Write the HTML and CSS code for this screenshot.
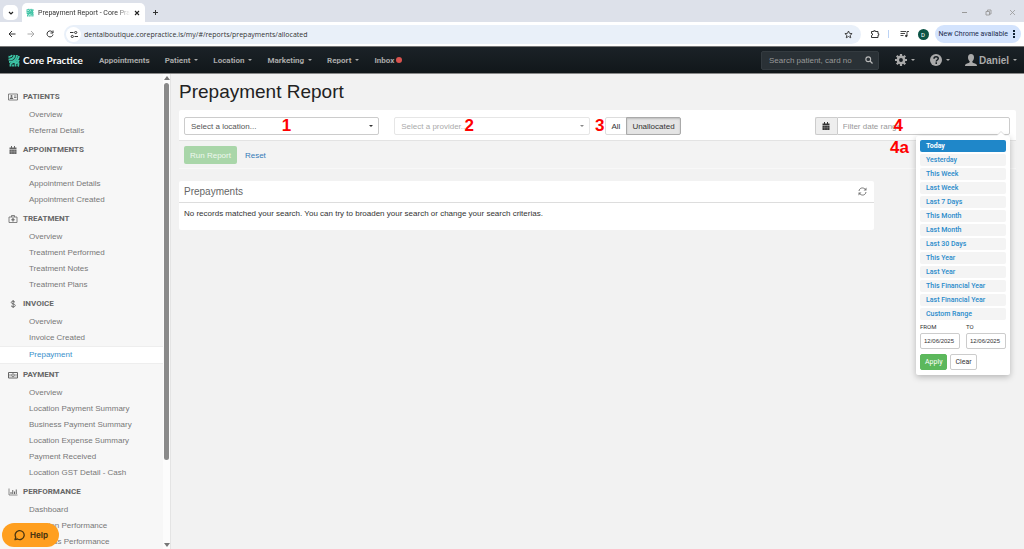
FILE: index.html
```html
<!DOCTYPE html>
<html lang="en">
<head>
    <meta charset="UTF-8">
    <meta name="viewport" content="width=device-width, initial-scale=1.0">
    <title>Prepayment Report - Core Practice</title>
    <link rel="stylesheet" href="styles.css">
</head>
<body>

    <svg class="defs" width="0" height="0" aria-hidden="true">
        <symbol id="tooth" viewBox="0 0 24 26">
            <g fill="none" stroke="#3cc3a4" stroke-width="3.700">
                <path d="M1 5.500c3 .5 6-.5 7-3.500M1 11c6 .5 11-3 12-9M2 16c9 0 15-5 16-14"/>
                <path d="M5 25v-4c0-3 4-4 7-5s8-5 10-12M10 25v-4M15 25v-6c3-1 6-4 7-7M20 25c1-2 1-5 1-8"/>
            </g>
        </symbol>
        <symbol id="calendar" viewBox="0 0 16 16">
            <path fill="currentColor" d="M1 3h3V0h2v3h4V0h2v3h3v3H1zM1 7h14v8a1 1 0 0 1-1 1H2a1 1 0 0 1-1-1z"/>
            <path stroke="#fff" stroke-opacity=".5" stroke-width=".8" d="M1 11.500h14M5.500 7v9M10.500 7v9"/>
        </symbol>
    </svg>

    <!-- Browser window -->
    <header class="browser">
        <div class="tab-strip">
            <button class="tab-search" aria-label="Search tabs"><svg width="6" height="4" viewBox="0 0 6 4"><path d="M1 1l2 2 2-2" fill="none" stroke="#222" stroke-width="1.2"/></svg></button>
            <div class="tab">
                <svg class="favicon" width="8" height="9"><use href="#tooth"/></svg>
                <span class="tab-title">Prepayment Report - Core Practice</span>
                <button class="icon-button" aria-label="Close tab"><svg width="6" height="6" viewBox="0 0 6 6"><path d="M1 1l4 4M5 1L1 5" stroke="#222" stroke-width="1.1"/></svg></button>
            </div>
            <button class="icon-button" aria-label="New tab"><svg width="7" height="7" viewBox="0 0 7 7"><path d="M3.500 1v5M1 3.500h5" stroke="#333"/></svg></button>
            <div class="window-buttons">
                <button class="icon-button" aria-label="Minimize"><svg width="7" height="7" viewBox="0 0 7 7"><path d="M1 3.500h5" stroke="#999"/></svg></button>
                <button class="icon-button" aria-label="Restore"><svg width="7" height="7" viewBox="0 0 7 7"><path d="M1 2.500h3.500V6H1zM2.500 2.500V1H6v4H4.500" fill="none" stroke="#999" stroke-width=".9"/></svg></button>
                <button class="icon-button" aria-label="Close"><svg width="7" height="7" viewBox="0 0 7 7"><path d="M1 1l5 5M6 1L1 6" stroke="#999" stroke-width=".8"/></svg></button>
            </div>
        </div>
        <div class="toolbar">
            <div class="toolbar-nav">
                <button class="icon-button" aria-label="Back"><svg width="8" height="8" viewBox="0 0 8 8"><path d="M7.500 4H1M4 1L1 4l3 3" fill="none" stroke="#333"/></svg></button>
                <button class="icon-button" aria-label="Forward"><svg width="8" height="8" viewBox="0 0 8 8"><path d="M.5 4H7M4 1l3 3-3 3" fill="none" stroke="#aaa"/></svg></button>
                <button class="icon-button" aria-label="Reload"><svg width="8" height="8" viewBox="0 0 8 8"><path d="M6.700 2.500A3 3 0 1 0 7 4.500M7 .5v2.500H4.500" fill="none" stroke="#333"/></svg></button>
            </div>
            <div class="omnibox">
                <button class="site-info" aria-label="Site information"><svg width="8" height="7" viewBox="0 0 8 7"><path d="M0 1.500h3.500M4.500 5.500H8" stroke="#333"/><circle cx="5.700" cy="1.500" r="1.100" fill="none" stroke="#333"/><circle cx="2.300" cy="5.500" r="1.100" fill="none" stroke="#333"/></svg></button>
                <input class="address" type="text" aria-label="Address" value="dentalboutique.corepractice.is/my/#/reports/prepayments/allocated">
                <button class="icon-button" aria-label="Bookmark"><svg width="9" height="9" viewBox="0 0 18 18"><path d="M9 2l2.100 4.700 5.100.5-3.900 3.400 1.200 5L9 13l-4.500 2.600 1.200-5L1.800 7.200l5.100-.5z" fill="none" stroke="#333" stroke-width="1.800"/></svg></button>
            </div>
            <button class="icon-button extensions" aria-label="Extensions"><svg width="10" height="10" viewBox="0 0 20 20"><path d="M3 5h4.500V3.500h3V5H16v4.500h1.500v3H16V17H3v-4l2-1V9.500L3 9z" fill="none" stroke="#333" stroke-width="2"/></svg></button>
            <span class="toolbar-divider"></span>
            <button class="icon-button media" aria-label="Media"><svg width="9" height="8" viewBox="0 0 18 16"><path d="M1 3h11M1 7h9M1 11h6M14 12V3h4" fill="none" stroke="#333" stroke-width="1.800"/><circle cx="12.500" cy="12" r="2.300" fill="#333"/></svg></button>
            <button class="profile" aria-label="Profile">D</button>
            <button class="update">New Chrome available <svg width="2" height="8" viewBox="0 0 2 8"><path d="M0 0h2v2H0zM0 3h2v2H0zM0 6h2v2H0z" fill="#123"/></svg></button>
        </div>
    </header>

    <!-- Site navigation -->
    <nav class="navbar">
        <a class="brand" href="#"><svg width="12" height="13"><use href="#tooth"/></svg>Core Practice</a>
        <div class="nav-links">
            <a href="#">Appointments</a>
            <a href="#">Patient<i class="caret"></i></a>
            <a href="#">Location<i class="caret"></i></a>
            <a href="#">Marketing<i class="caret"></i></a>
            <a href="#">Report<i class="caret"></i></a>
            <a href="#">Inbox<i class="dot"></i></a>
        </div>
        <form class="search">
            <input type="text" aria-label="Search" placeholder="Search patient, card no">
            <button class="icon-button" type="button" aria-label="Search"><svg width="8" height="8" viewBox="0 0 16 16"><circle cx="6.500" cy="6.500" r="4.800" fill="none" stroke="#bbb" stroke-width="2.200"/><path d="M10 10l5 5" stroke="#bbb" stroke-width="2.600"/></svg></button>
        </form>
        <div class="nav-tools">
            <a href="#" aria-label="Settings"><svg width="12" height="12" viewBox="0 0 24 24"><circle cx="12" cy="12" r="6.300" fill="none" stroke="#aaa" stroke-width="5"/><path d="M12 0v5M12 19v5M0 12h5M19 12h5M3.500 3.500L7 7M17 17l3.500 3.500M20.500 3.500L17 7M7 17l-3.500 3.500" stroke="#aaa" stroke-width="4.400"/></svg><i class="caret"></i></a>
            <a href="#" aria-label="Help topics"><svg width="12" height="12" viewBox="0 0 24 24"><circle cx="12" cy="12" r="12" fill="#aaa"/><path d="M8 9.500C8 4 16.500 4.500 16.500 9c0 3-4 3-4 6M12.500 16.500v3.500" fill="none" stroke="#171e22" stroke-width="3"/></svg><i class="caret"></i></a>
            <a class="user" href="#"><svg width="12" height="12" viewBox="0 0 24 24"><path fill="#aaa" d="M12 0c4 0 6 3 6 7s-2 6-3.500 8c0 2 1 2.500 4 3.500 4 1.500 5.500 2 5.500 5.500H0c0-3.500 1.500-4 5.500-5.500 3-1 4-1.500 4-3.500C8 13 6 11 6 7s2-7 6-7z"/></svg>Daniel<i class="caret"></i></a>
        </div>
    </nav>

    <div class="page">
        <aside class="sidebar">
            <div class="menu">
                <h2><svg width="10" height="8" viewBox="0 0 20 16"><path d="M1 2h18v12H1zM12 6h5M12 9h5" fill="none" stroke="currentColor" stroke-width="1.600"/><circle cx="7" cy="6" r="2" fill="currentColor"/><path d="M3.500 12c0-5 7-5 7 0z" fill="currentColor"/></svg>PATIENTS</h2>
                <ul>
                    <li><a href="#">Overview</a></li>
                    <li><a href="#">Referral Details</a></li>
                </ul>
                <h2><svg width="10" height="8"><use href="#calendar"/></svg>APPOINTMENTS</h2>
                <ul>
                    <li><a href="#">Overview</a></li>
                    <li><a href="#">Appointment Details</a></li>
                    <li><a href="#">Appointment Created</a></li>
                </ul>
                <h2><svg width="10" height="8" viewBox="0 0 20 16"><path d="M2 4h16v11H2zM7 4V1h6v3" fill="none" stroke="currentColor" stroke-width="1.600"/><path d="M10 6v7M6.500 9.500h7" stroke="currentColor" stroke-width="2.400"/></svg>TREATMENT</h2>
                <ul>
                    <li><a href="#">Overview</a></li>
                    <li><a href="#">Treatment Performed</a></li>
                    <li><a href="#">Treatment Notes</a></li>
                    <li><a href="#">Treatment Plans</a></li>
                </ul>
                <h2><svg width="10" height="8" viewBox="0 0 20 16"><path d="M14 4.500C12 1.500 6.500 2 6.500 5c0 3.500 8 2 8 6 0 3.500-6.500 3.500-8.500.5M10.300 0v16" fill="none" stroke="currentColor" stroke-width="1.900"/></svg>INVOICE</h2>
                <ul>
                    <li><a href="#">Overview</a></li>
                    <li><a href="#">Invoice Created</a></li>
                    <li class="active"><a href="#">Prepayment</a></li>
                </ul>
                <h2><svg width="10" height="8" viewBox="0 0 20 16"><path d="M1 3h18v11H1z" fill="none" stroke="currentColor" stroke-width="2"/><circle cx="10" cy="8.500" r="3" fill="none" stroke="currentColor" stroke-width="1.600"/><path d="M10 7v3M4 6v5M16 6v5" stroke="currentColor" stroke-width="1.500"/></svg>PAYMENT</h2>
                <ul>
                    <li><a href="#">Overview</a></li>
                    <li><a href="#">Location Payment Summary</a></li>
                    <li><a href="#">Business Payment Summary</a></li>
                    <li><a href="#">Location Expense Summary</a></li>
                    <li><a href="#">Payment Received</a></li>
                    <li><a href="#">Location GST Detail - Cash</a></li>
                </ul>
                <h2><svg width="10" height="8" viewBox="0 0 20 16"><path d="M2 1v13h17" fill="none" stroke="currentColor" stroke-width="1.500"/><path d="M6 12V8M9.500 12V4M13 12V7M16.500 12V3" stroke="currentColor" stroke-width="2"/></svg>PERFORMANCE</h2>
                <ul>
                    <li><a href="#">Dashboard</a></li>
                    <li><a href="#">Location Performance</a></li>
                    <li><a href="#">Business Performance</a></li>
                </ul>
            </div>
            <div class="scrollbar">
                <i class="arrow-up"></i>
                <i class="thumb"></i>
                <i class="arrow-down"></i>
            </div>
        </aside>

        <main class="content">
            <h1>Prepayment Report</h1>

            <form class="filters">
                <div class="filter-row">
                    <div class="field">
                        <select class="control" aria-label="Location"><option>Select a location...</option></select>
                        <i class="caret"></i>
                        <b class="mark mark-1">1</b>
                    </div>
                    <div class="field disabled">
                        <select class="control" aria-label="Provider" disabled><option>Select a provider...</option></select>
                        <i class="caret"></i>
                        <b class="mark mark-2">2</b>
                    </div>
                    <div class="field toggle">
                        <button type="button">All</button>
                        <button type="button" class="pressed" aria-pressed="true">Unallocated</button>
                        <b class="mark mark-3">3</b>
                    </div>
                    <div class="field date-range">
                        <label class="addon" for="range" aria-label="Date range"><svg width="8" height="8"><use href="#calendar"/></svg></label>
                        <input class="control" id="range" type="text" placeholder="Filter date range">
                        <b class="mark mark-4">4</b>
                        <b class="mark mark-4a">4a</b>
                        <div class="range-menu">
                            <button type="button" class="range selected">Today</button>
                            <button type="button" class="range">Yesterday</button>
                            <button type="button" class="range">This Week</button>
                            <button type="button" class="range">Last Week</button>
                            <button type="button" class="range">Last 7 Days</button>
                            <button type="button" class="range">This Month</button>
                            <button type="button" class="range">Last Month</button>
                            <button type="button" class="range">Last 30 Days</button>
                            <button type="button" class="range">This Year</button>
                            <button type="button" class="range">Last Year</button>
                            <button type="button" class="range">This Financial Year</button>
                            <button type="button" class="range">Last Financial Year</button>
                            <button type="button" class="range">Custom Range</button>
                            <div class="range-dates">
                                <label>FROM<input type="text" value="12/06/2025"></label>
                                <label>TO<input type="text" value="12/06/2025"></label>
                            </div>
                            <div class="range-actions">
                                <button type="button" class="apply">Apply</button>
                                <button type="button" class="clear">Clear</button>
                            </div>
                        </div>
                    </div>
                </div>
                <div class="filter-actions">
                    <button type="button" class="run" disabled>Run Report</button>
                    <a href="#">Reset</a>
                </div>
            </form>

            <div class="results-row">
                <section class="results">
                    <header>
                        <h3>Prepayments</h3>
                        <button class="icon-button" aria-label="Refresh"><svg width="9" height="9" viewBox="0 0 18 18"><path d="M2 8c1-7 9-8 13-3M16 10c-1 7-9 8-13 3" fill="none" stroke="#777" stroke-width="2"/><path d="M17 1v6h-6zM1 17v-6h6z" fill="#777"/></svg></button>
                    </header>
                    <p>No records matched your search. You can try to broaden your search or change your search criterias.</p>
                </section>
            </div>
        </main>
    </div>

    <button class="help"><svg width="12" height="12" viewBox="0 0 24 24"><path d="M4 21l1.500-4.500A9 9 0 1 1 9 20z" fill="none" stroke="#4a3510" stroke-width="2.600" stroke-linejoin="round"/></svg>Help</button>

</body>
</html>
```
FILE: styles.css
```css
* {
    box-sizing: border-box;
}
body {
    margin: 0;
    height: 100vh;
    display: flex;
    flex-direction: column;
    overflow: hidden;
    font-family: "Liberation Sans", Arial, sans-serif;
    font-size: 8px;
    color: #333;
    background-color: #f2f2f2;
}
button, input, select {
    font-family: inherit;
    font-size: inherit;
    color: inherit;
    margin: 0;
    padding: 0;
    min-width: 0;
}
a {
    color: inherit;
    text-decoration: none;
}
svg {
    flex: none;
}
.defs {
    position: absolute;
}
.icon-button {
    display: flex;
    background: none;
    border: none;
}
.caret {
    border: 2px solid transparent;
    border-top-color: currentColor;
    border-bottom: 0;
}

/* browser */
.browser {
    flex: none;
    font-family: Roboto, sans-serif;
}
.tab-strip {
    height: 22px;
    padding: 3px 8px 0 3px;
    display: flex;
    align-items: center;
    background-color: #dde1ea;
}
.tab-search {
    width: 15px;
    height: 15px;
    display: flex;
    align-items: center;
    justify-content: center;
    background-color: #fff;
    border: none;
    border-radius: 5px;
}
.tab {
    width: 123px;
    height: 19px;
    margin: 0 7px 0 4px;
    padding: 0 5px 0 4px;
    display: flex;
    align-items: center;
    gap: 4px;
    background-color: #fff;
    border-radius: 5px 5px 0 0;
    font-size: 7px;
}
.tab-title {
    flex: 1;
    overflow: hidden;
    white-space: nowrap;
    mask-image: linear-gradient(to right, #000 85%, transparent);
}
.window-buttons {
    margin-left: auto;
    display: flex;
    gap: 17px;
}
.toolbar {
    height: 24px;
    padding: 0 3px 0 8px;
    display: flex;
    align-items: center;
    background-color: #fff;
}
.toolbar-nav {
    display: flex;
    gap: 11px;
    margin-right: 10px;
}
.omnibox {
    flex: 1;
    height: 19px;
    padding: 0 8px 0 2px;
    display: flex;
    align-items: center;
    gap: 3px;
    background-color: #e9f0f9;
    border-radius: 10px;
}
.site-info {
    width: 15px;
    height: 15px;
    display: flex;
    align-items: center;
    justify-content: center;
    background-color: #fff;
    border: none;
    border-radius: 50%;
}
.address {
    flex: 1;
    background: none;
    border: none;
    font-family: "Open Sans", sans-serif;
    font-size: 7px;
}
.extensions {
    margin: 0 8px 0 9px;
}
.toolbar-divider {
    width: 1px;
    height: 8px;
    background-color: #bcd3f5;
}
.media {
    margin: 0 9px 0 11px;
}
.profile {
    width: 11px;
    height: 11px;
    background-color: #0b5345;
    border: none;
    border-radius: 50%;
    color: #fff;
    font-size: 6px;
    line-height: 11px;
}
.update {
    height: 18px;
    margin-left: 6px;
    padding: 0 6px 0 4px;
    display: flex;
    align-items: center;
    gap: 5px;
    background-color: #d3e3fd;
    border: none;
    border-radius: 9px;
    color: #1b2d4d;
    font-size: 7px;
}

/* navbar */
.navbar {
    flex: none;
    height: 28px;
    padding: 0 7px 0 8px;
    display: flex;
    align-items: center;
    background-image: linear-gradient(#1b2227, #11171a);
    background-clip: padding-box;
    border-top: 1px solid #777;
    border-bottom: 1px solid #888;
    color: #aaa;
}
.navbar a {
    display: flex;
    align-items: center;
    font-weight: bold;
}
.navbar .brand {
    width: 91px;
    gap: 3px;
    color: #fff;
    font-family: Lato, sans-serif;
    font-size: 10px;
    white-space: nowrap;
}
.nav-links {
    display: flex;
    gap: 15px;
    font-family: Roboto, Arial, sans-serif;
}
.nav-links .caret {
    margin-left: 4px;
}
.dot {
    width: 6px;
    height: 6px;
    margin-left: 2px;
    background-color: #d9534f;
    border-radius: 50%;
}
.search {
    width: 118px;
    height: 19px;
    margin-left: auto;
    padding: 0 5px 0 7px;
    display: flex;
    align-items: center;
    background-color: #2a3136;
    border: 1px solid #343b40;
    border-radius: 2px;
}
.search input {
    flex: 1;
    background: none;
    border: none;
}
.search input::placeholder {
    color: #999;
}
.nav-tools {
    margin-left: 16px;
    display: flex;
    gap: 15px;
}
.nav-tools .caret {
    margin-left: 4px;
}
.user {
    gap: 2px;
    font-size: 10px;
}
.nav-tools .user .caret {
    margin-left: 2px;
}

/* sidebar */
.page {
    flex: 1;
    min-height: 0;
    display: flex;
}
.sidebar {
    width: 171px;
    flex: none;
    display: flex;
    background-color: #f7f7f7;
    border-right: 1px solid #e4e4e4;
    color: #777;
}
.menu {
    flex: 1;
    padding-top: 12px;
    overflow: hidden;
}
.menu h2 {
    height: 21px;
    margin: 0;
    padding-left: 8px;
    display: flex;
    align-items: center;
    gap: 5px;
    font-family: Roboto, Arial, sans-serif;
    font-size: 8px;
    color: #666;
}
.menu ul {
    margin: 0;
    padding: 0;
    list-style: none;
}
.menu a {
    display: block;
    padding-left: 29px;
    line-height: 16px;
}
.menu .active {
    background-color: #fff;
    border-top: 1px solid #eee;
    border-bottom: 1px solid #eee;
    color: #3a8fcb;
}
.scrollbar {
    width: 7px;
    padding: 2px 1px;
    display: flex;
    flex-direction: column;
    align-items: center;
    background-color: #fcfcfc;
}
.arrow-up, .arrow-down {
    border: 3px solid transparent;
}
.arrow-up {
    border-top: 0;
    border-bottom: 4px solid #777;
}
.arrow-down {
    margin-top: auto;
    border-bottom: 0;
    border-top: 4px solid #777;
}
.thumb {
    width: 5px;
    height: 80%;
    margin-top: 3px;
    background-color: #8a8a8a;
    border-radius: 3px;
}

/* content */
.content {
    flex: 1;
    padding: 6px 8px 0;
}
h1 {
    margin: 0 0 6px;
    font-size: 19px;
    font-weight: normal;
    line-height: 24px;
    color: #222;
}
.filters {
    background-color: #fff;
    border-radius: 2px;
}
.filter-row {
    padding: 7px 6px 5px 5px;
    display: grid;
    grid-template-columns: repeat(4, 1fr);
    gap: 15px;
    border-bottom: 1px solid #e3e3e3;
}
.field {
    position: relative;
    display: flex;
    height: 18px;
}
.field > .caret {
    position: absolute;
    right: 6px;
    top: 8px;
}
.control {
    flex: 1;
    height: 18px;
    padding: 0 6px;
    appearance: none;
    background-color: #fff;
    border: 1px solid #ccc;
    border-radius: 2px;
    color: #555;
    opacity: 1;
}
.control::placeholder {
    color: #999;
}
.disabled .control {
    border-color: #e6e6e6;
    color: #aaa;
}
.disabled .caret {
    color: #888;
}
.toggle button {
    padding: 0 6px;
    background-color: #fff;
    border: 1px solid #ddd;
    border-radius: 2px 0 0 2px;
}
.toggle .pressed {
    margin-left: -1px;
    padding: 0 5px;
    background-color: #e4e4e4;
    border-color: #aaa;
    border-radius: 0 2px 2px 0;
    box-shadow: inset 0 1px 2px #bbb;
}
.addon {
    width: 22px;
    display: flex;
    align-items: center;
    justify-content: center;
    background-color: #eee;
    border: 1px solid #ccc;
    border-right: 0;
    border-radius: 2px 0 0 2px;
}
.date-range .control {
    border-radius: 0 2px 2px 0;
    padding: 0 5px;
}
.filter-actions {
    padding: 5px;
    display: flex;
    align-items: center;
    gap: 8px;
    background-color: #f3f3f3;
    box-shadow: inset 0 -1px #f8f8f8;
    color: #337ab7;
}
.run {
    height: 18px;
    padding: 0 6px;
    background-color: #a9d6a9;
    border: none;
    border-radius: 2px;
    color: #eef8ee;
}

/* step numbers */
.mark {
    position: absolute;
    z-index: 2;
    top: 0;
    font-size: 17px;
    line-height: 18px;
    color: #f00;
}
.mark-1 {
    left: 50%;
}
.mark-2 {
    left: 36%;
}
.mark-3 {
    right: 100%;
}
.mark-4 {
    right: 107px;
}
.mark-4a {
    top: 22px;
    right: 101px;
}

/* date range menu */
.range-menu {
    position: absolute;
    z-index: 1;
    top: 19px;
    right: 0;
    width: 94px;
    padding: 4px 4px 5px;
    display: flex;
    flex-direction: column;
    gap: 2px;
    background-color: #fff;
    border-radius: 2px;
    box-shadow: 0 2px 6px rgba(0, 0, 0, 0.25);
    font-family: Roboto, Arial, sans-serif;
}
.range-menu::before {
    content: "";
    position: absolute;
    top: -4px;
    right: 5px;
    border: 4px solid transparent;
    border-top: 0;
    border-bottom-color: #fff;
    filter: drop-shadow(0 -1px 0 #ddd);
}
.range {
    height: 12px;
    padding: 0 6px;
    background-color: #f4f4f4;
    border: none;
    border-radius: 2px;
    color: #2a8bcb;
    font-size: 7px;
    font-weight: 500;
    text-align: left;
}
.selected {
    background-color: #1f87c9;
    color: #fff;
    font-weight: bold;
}
.range-dates {
    display: grid;
    grid-template-columns: 1fr 1fr;
    gap: 6px;
    font-size: 6px;
    line-height: 10px;
}
.range-dates input {
    display: block;
    width: 100%;
    height: 16px;
    margin-top: 1px;
    padding: 0 3px;
    border: 1px solid #ccc;
    border-radius: 2px;
    font-family: "Liberation Sans", Arial, sans-serif;
}
.range-actions {
    margin-top: 3px;
    display: flex;
    gap: 3px;
    font-size: 7px;
}
.range-actions button {
    height: 16px;
    padding: 0 4px;
    border: 1px solid #ccc;
    border-radius: 2px;
    background-color: #fff;
}
.range-actions .apply {
    background-color: #5cb85c;
    border-color: #5cb85c;
    color: #fff;
}

/* results */
.results-row {
    margin-top: 12px;
    display: grid;
    grid-template-columns: repeat(12, 1fr);
    gap: 15px;
}
.results {
    grid-column: span 10;
    background-color: #fff;
    border-radius: 2px;
}
.results header {
    height: 22px;
    padding: 0 7px 0 5px;
    display: flex;
    align-items: center;
    justify-content: space-between;
    border-bottom: 1px solid #ddd;
}
.results h3 {
    margin: 0;
    font-size: 10px;
    font-weight: normal;
    color: #666;
}
.results p {
    margin: 0;
    padding: 5px 5px 10px;
    line-height: 12px;
}

.help {
    position: fixed;
    z-index: 3;
    left: 2px;
    bottom: 2px;
    width: 57px;
    height: 24px;
    display: flex;
    align-items: center;
    justify-content: center;
    gap: 5px;
    background-color: #ff9f1f;
    border: none;
    border-radius: 12px;
    color: #4a3510;
    font-family: Inter, sans-serif;
    font-size: 8px;
    font-weight: bold;
}
```
